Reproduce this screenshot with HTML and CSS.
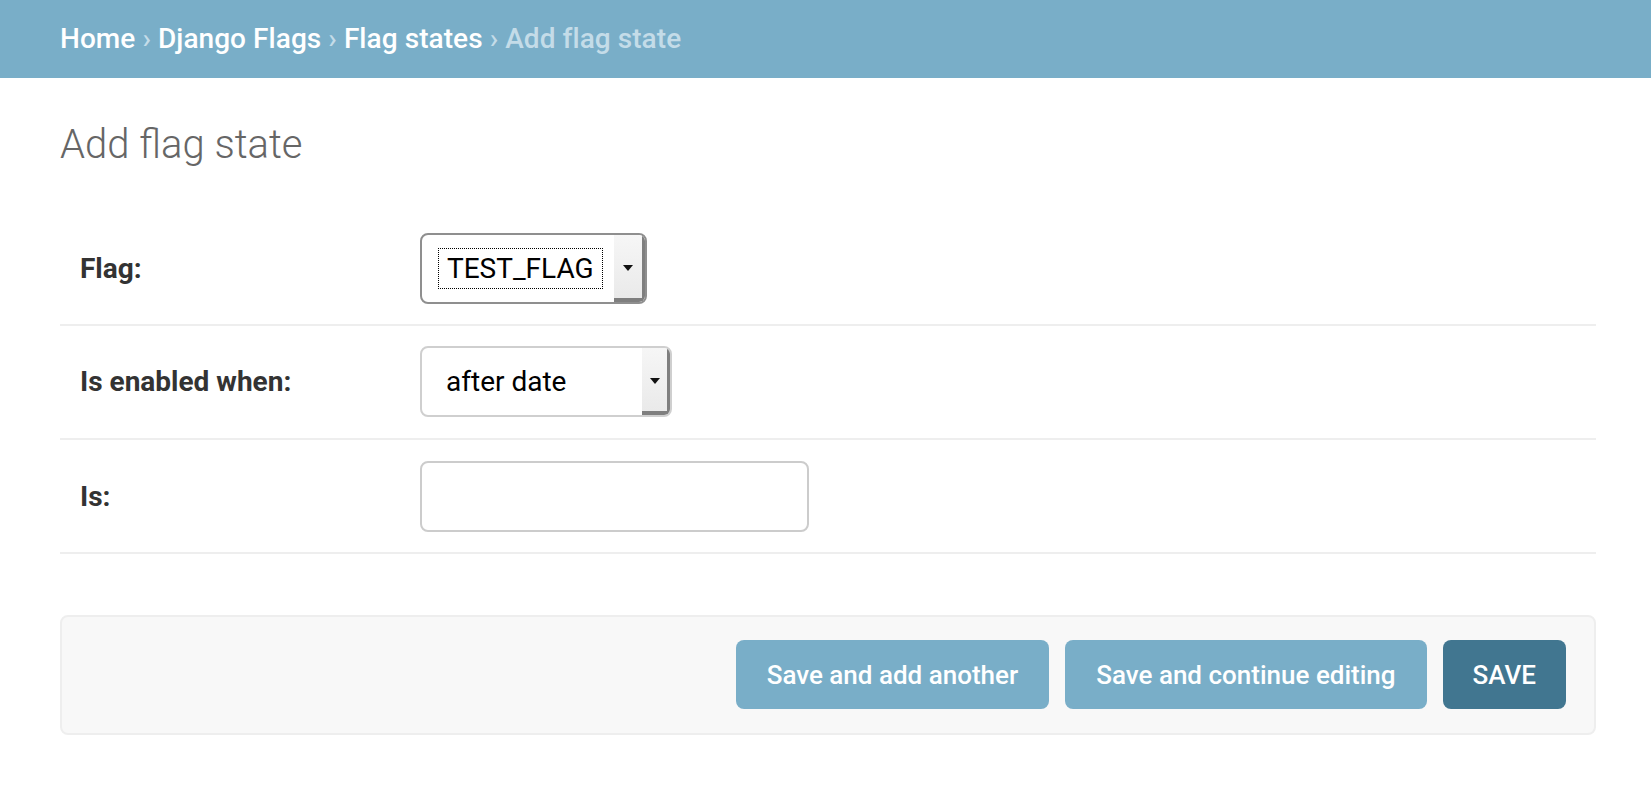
FILE: index.html
```html
<!DOCTYPE html>
<html lang="en">
<head>
<meta charset="utf-8">
<title>Add flag state</title>
<link rel="stylesheet" href="styles.css">
</head>
<body>
<div class="breadcrumbs">
  <a href="#">Home</a> <span class="sep">›</span> <a href="#">Django Flags</a> <span class="sep">›</span> <a href="#">Flag states</a> <span class="sep">›</span> <span class="current">Add flag state</span>
</div>
<div class="content">
  <h1 class="title">Add flag state</h1>
  <div class="fieldset">
    <div class="form-row">
      <label class="label">Flag:</label>
      <div class="select select-focus">
        <div class="select-value"><span class="focus-ring">TEST_FLAG</span></div>
        <div class="select-btn"><span class="caret"></span></div>
      </div>
    </div>
    <div class="form-row form-row-mid">
      <label class="label">Is enabled when:</label>
      <div class="select select-plain">
        <div class="select-value select-value-wide">after date</div>
        <div class="select-btn select-btn-narrow"><span class="caret"></span></div>
      </div>
    </div>
    <div class="form-row">
      <label class="label">Is:</label>
      <div class="text-input"></div>
    </div>
  </div>
  <div class="submit-row">
    <button class="btn">Save and add another</button>
    <button class="btn">Save and continue editing</button>
    <button class="btn btn-default">SAVE</button>
  </div>
</div>
</body>
</html>
```
FILE: styles.css
```css
html, body {
  margin: 0;
  padding: 0;
  background: #fff;
}

body {
  font-family: Roboto, "Liberation Sans", Arial, sans-serif;
  color: #333;
}

.breadcrumbs {
  background: #79aec8;
  padding: 20px 60px;
  height: 38px;
  line-height: 38px;
  font-size: 28px;
  font-weight: 500;
  letter-spacing: 0.06px;
  color: #c4dce8;
  white-space: nowrap;
}

.breadcrumbs a {
  color: #fff;
  text-decoration: none;
}

.breadcrumbs .sep,
.breadcrumbs .current {
  color: #c4dce8;
}

.content {
  padding: 43px 55px 0 60px;
}

.title {
  margin: 0 0 44px;
  font-size: 40px;
  line-height: 48px;
  font-weight: 300;
  color: #666;
}

.fieldset {
  margin-bottom: 61px;
}

.form-row {
  display: flex;
  align-items: center;
  padding: 20px;
  border-bottom: 2px solid #eee;
}

.form-row-mid {
  padding-top: 20px;
  padding-bottom: 21px;
}

.label {
  width: 340px;
  flex: none;
  font-size: 28px;
  font-weight: 700;
  color: #333;
}

.select {
  display: flex;
  align-items: stretch;
  box-sizing: border-box;
  border-radius: 8px;
  overflow: hidden;
  background: #fff;
  font-size: 28px;
  color: #000;
}

.select-focus {
  width: 227px;
  height: 71px;
  border: 2px solid #8f8f8f;
}

.select-plain {
  width: 252px;
  height: 71px;
  border: 2px solid #cfcfcf;
}

.select-value {
  flex: 1;
  display: flex;
  align-items: center;
  padding-left: 16px;
}

.select-value-wide {
  padding-left: 24px;
}

.focus-ring {
  display: inline-block;
  height: 39px;
  line-height: 39px;
  padding: 0 8px;
  border: 1px dotted #000;
}

.select-btn {
  width: 28px;
  flex: none;
  display: flex;
  align-items: center;
  justify-content: center;
  padding-right: 3px;
  padding-bottom: 2px;
  background: linear-gradient(#f6f6f6, #e9e9e9);
  box-shadow: inset -3px -4px 0 #7f7f7f;
}

.select-btn-narrow {
  width: 25px;
}

.caret {
  width: 0;
  height: 0;
  border-left: 5px solid transparent;
  border-right: 5px solid transparent;
  border-top: 6px solid #111;
}

.text-input {
  box-sizing: border-box;
  width: 389px;
  height: 71px;
  margin-top: 1px;
  border: 2px solid #ccc;
  border-radius: 8px;
  background: #fff;
}

.submit-row {
  display: flex;
  justify-content: flex-end;
  gap: 16px;
  padding: 23px 28px 24px;
  background: #f8f8f8;
  border: 2px solid #eee;
  border-radius: 8px;
}

.btn {
  height: 69px;
  padding: 0 31px;
  border: none;
  border-radius: 8px;
  background: #79aec8;
  color: #fff;
  font-family: Roboto, "Liberation Sans", Arial, sans-serif;
  font-size: 26px;
  font-weight: 500;
  cursor: pointer;
}

.btn-default {
  padding: 0 30px;
  background: #417690;
}
```
